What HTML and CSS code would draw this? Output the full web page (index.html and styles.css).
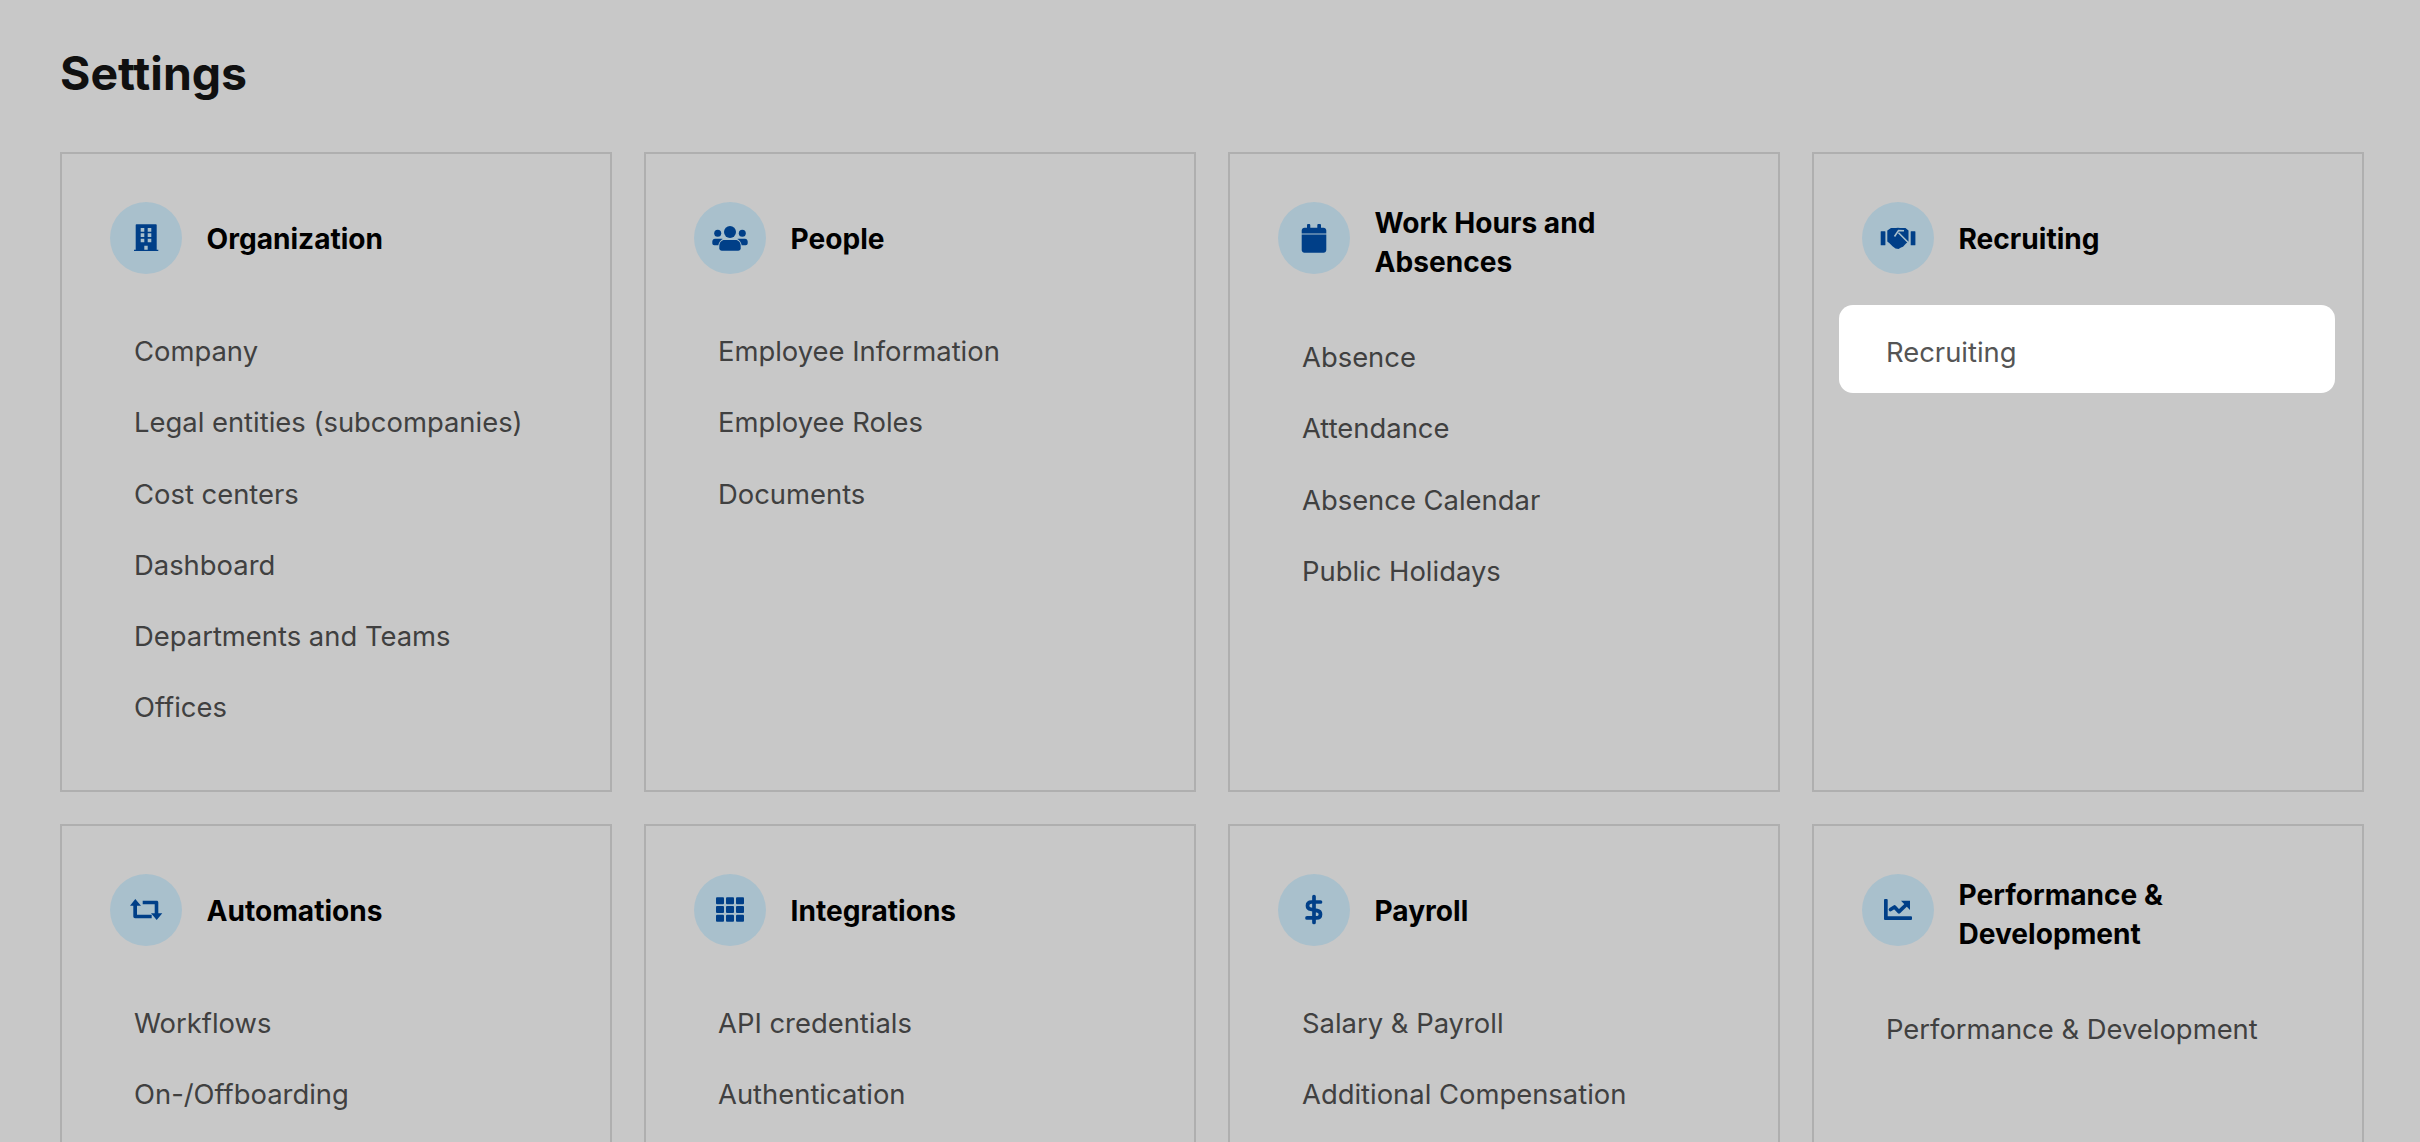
FILE: index.html
```html
<!DOCTYPE html>
<html lang="en">
<head>
    <meta charset="UTF-8">
    <meta name="viewport" content="width=device-width, initial-scale=1.0">
    <title>Settings</title>
    <link rel="stylesheet" href="styles.css">
</head>
<body>
    <div class="page">
        <h1 class="page-title">Settings</h1>
        <div class="card-grid">
            <section class="card">
                <div class="card-header">
                    <span class="card-icon">
                        <svg viewBox="0 0 36 36" class="icon"><path fill-rule="evenodd" d="M8.500 4.300h19.400a.8.800 0 0 1 .8.800v24.600h1.600V31H6v-1.300h1.700V5.100a.8.800 0 0 1 .8-.8zM12.700 8v3.700h3.600V8zM19.700 8v3.700h3.600V8zM12.700 13.300V17h3.600v-3.700zM19.700 13.300V17h3.600v-3.700zM12.700 18.700v3.600h3.600v-3.600zM19.700 18.700v3.600h3.600v-3.600zM16.300 25.700v4h3.400v-4z"/></svg>
                    </span>
                    <h2 class="card-title">Organization</h2>
                </div>
                <ul class="card-links">
                    <li class="card-link">Company</li>
                    <li class="card-link">Legal entities (subcompanies)</li>
                    <li class="card-link">Cost centers</li>
                    <li class="card-link">Dashboard</li>
                    <li class="card-link">Departments and Teams</li>
                    <li class="card-link">Offices</li>
                </ul>
            </section>
            <section class="card">
                <div class="card-header">
                    <span class="card-icon">
                        <svg viewBox="0 0 36 36" class="icon"><circle cx="18" cy="12" r="6"/><path d="M12.500 20h11c3 0 5.200 2.600 5.200 6v2.200c0 1.400-1.100 2.500-2.500 2.500H9.800c-1.400 0-2.500-1.100-2.500-2.500V26c0-3.400 2.200-6 5.200-6z"/><circle cx="5.700" cy="13.300" r="3.500"/><circle cx="30.300" cy="13.300" r="3.500"/><path d="M3 18.700h6.500c.4 0 .8.100 1.200.300-2.200 1.200-3.900 3.400-4.400 6.300H2.300c-1.100 0-2-.9-2-2v-1.800c0-1.500 1.200-2.800 2.700-2.800z"/><path d="M33 18.700h-6.500c-.4 0-.8.100-1.200.300 2.200 1.200 3.900 3.400 4.400 6.300h4c1.100 0 2-.9 2-2v-1.800c0-1.500-1.200-2.800-2.700-2.800z"/></svg>
                    </span>
                    <h2 class="card-title">People</h2>
                </div>
                <ul class="card-links">
                    <li class="card-link">Employee Information</li>
                    <li class="card-link">Employee Roles</li>
                    <li class="card-link">Documents</li>
                </ul>
            </section>
            <section class="card">
                <div class="card-header">
                    <span class="card-icon">
                        <svg viewBox="0 0 36 36" class="icon"><path d="M11 5.200c0-.7.500-1.200 1.200-1.200h.9c.7 0 1.200.500 1.200 1.200v2.500h7V5.200c0-.7.500-1.200 1.200-1.200h1.300c.7 0 1.200.500 1.200 1.200v2.500h2.500c1.600 0 2.800 1.200 2.800 2.800v3H5.700v-3c0-1.600 1.200-2.800 2.800-2.800H11z"/><path d="M5.700 14.500h24.600V30c0 1.500-1.200 2.700-2.700 2.700H8.400c-1.500 0-2.700-1.200-2.700-2.700z"/></svg>
                    </span>
                    <h2 class="card-title">Work Hours and Absences</h2>
                </div>
                <ul class="card-links">
                    <li class="card-link">Absence</li>
                    <li class="card-link">Attendance</li>
                    <li class="card-link">Absence Calendar</li>
                    <li class="card-link">Public Holidays</li>
                </ul>
            </section>
            <section class="card">
                <div class="card-header">
                    <span class="card-icon">
                        <svg viewBox="0 0 36 36" class="icon"><rect x=".7" y="11.300" width="4.700" height="14" rx=".5"/><rect x="30.700" y="11.300" width="4.700" height="14" rx=".5"/><path d="M11 8h5l2-.3 2 .3h5.500l3 2.500v11l-2.500 2-3 3.200-2 .8-2.500 1.500-3-.6-3-2.200-3-3-2.200-1.700V10.500z"/><path class="icon-cut" d="M14.500 16.500 18.500 10.500l5.500.3M18.500 12.700l10 10"/></svg>
                    </span>
                    <h2 class="card-title">Recruiting</h2>
                </div>
                <ul class="card-links">
                    <li class="card-link card-link-active">Recruiting</li>
                </ul>
            </section>
            <section class="card">
                <div class="card-header">
                    <span class="card-icon">
                        <svg viewBox="0 0 36 36" class="icon"><path d="M7.300 7 13 13.700H9v9h14.700v3.600H7a1.700 1.700 0 0 1-1.700-1.700V13.700H2z"/><path d="M14.700 8.700H28.600c1 0 1.700.7 1.700 1.700V21.300h4L28.700 28 23 21.300h3.700v-9h-12z"/></svg>
                    </span>
                    <h2 class="card-title">Automations</h2>
                </div>
                <ul class="card-links">
                    <li class="card-link">Workflows</li>
                    <li class="card-link">On-/Offboarding</li>
                </ul>
            </section>
            <section class="card">
                <div class="card-header">
                    <span class="card-icon">
                        <svg viewBox="0 0 36 36" class="icon"><rect x="4" y="5.300" width="8" height="7" rx="1"/><rect x="14" y="5.300" width="8" height="7" rx="1"/><rect x="24" y="5.300" width="8" height="7" rx="1"/><rect x="4" y="14" width="8" height="7" rx="1"/><rect x="14" y="14" width="8" height="7" rx="1"/><rect x="24" y="14" width="8" height="7" rx="1"/><rect x="4" y="22.700" width="8" height="7" rx="1"/><rect x="14" y="22.700" width="8" height="7" rx="1"/><rect x="24" y="22.700" width="8" height="7" rx="1"/></svg>
                    </span>
                    <h2 class="card-title">Integrations</h2>
                </div>
                <ul class="card-links">
                    <li class="card-link">API credentials</li>
                    <li class="card-link">Authentication</li>
                </ul>
            </section>
            <section class="card">
                <div class="card-header">
                    <span class="card-icon">
                        <svg viewBox="0 0 36 36" class="icon"><path class="icon-stroke" d="M18 4.500v26M24.500 10H15.500c-3 0-4 1.800-4 3.700 0 2 1.300 3.200 3.300 3.600l6.400 1.300c2 .4 3.300 1.600 3.300 3.600 0 2-1 3.700-4 3.700H11"/></svg>
                    </span>
                    <h2 class="card-title">Payroll</h2>
                </div>
                <ul class="card-links">
                    <li class="card-link">Salary &amp; Payroll</li>
                    <li class="card-link">Additional Compensation</li>
                </ul>
            </section>
            <section class="card">
                <div class="card-header">
                    <span class="card-icon">
                        <svg viewBox="0 0 36 36" class="icon"><path d="M4 8a1 1 0 0 1 1-1h1.700a1 1 0 0 1 1 1v16.300H31a1 1 0 0 1 1 1V27a1 1 0 0 1-1 1H5a1 1 0 0 1-1-1z"/><path class="icon-stroke" d="M10.500 17.500 14.500 15l4.500 4.700 8-7.700"/><path d="M21 8.700h9V18z"/></svg>
                    </span>
                    <h2 class="card-title">Performance &amp; Development</h2>
                </div>
                <ul class="card-links">
                    <li class="card-link">Performance &amp; Development</li>
                </ul>
            </section>
        </div>
    </div>
</body>
</html>
```

FILE: styles.css
```css
html, body {
    height: 100%;
}
body {
    margin: 0;
    overflow: hidden;
    background-color: #c8c8c8;
    font-family: Inter, "Liberation Sans", sans-serif;
}
.page {
    padding: 46px 56px 0 60px;
}
.page-title {
    margin: 0 0 52px;
    font-size: 46.4px;
    line-height: 54px;
    font-weight: 700;
    color: #101010;
}
.card-grid {
    display: grid;
    grid-template-columns: repeat(4, 1fr);
    grid-auto-rows: 640px;
    gap: 32px;
}
.card {
    box-sizing: border-box;
    border: 2px solid #afafaf;
    padding: 48px 27px 0 25px;
}
.card-header {
    display: flex;
    align-items: center;
    gap: 24.5px;
    padding-left: 23px;
    margin-bottom: 42px;
}
.card-icon {
    display: flex;
    flex: none;
    align-self: flex-start;
    align-items: center;
    justify-content: center;
    width: 72px;
    height: 72px;
    border-radius: 50%;
    background-color: #a9c0cc;
}
.icon {
    width: 36px;
    height: 36px;
    fill: #003f88;
}
.icon-cut {
    fill: none;
    stroke: #a9c0cc;
    stroke-width: 1.6;
}
.icon-stroke {
    fill: none;
    stroke: #003f88;
    stroke-width: 3.7;
    stroke-linecap: round;
    stroke-linejoin: round;
}
.card-title {
    margin: 2px 0 -1px;
    max-width: 300px;
    font-size: 28.1px;
    line-height: 38.6px;
    font-weight: 700;
    color: #000;
}
.card-links {
    margin: 0;
    padding: 0;
    list-style: none;
}
.card-link {
    padding-left: 47px;
    font-size: 27.4px;
    line-height: 71.3px;
    color: #404040;
}
.card-link-active {
    margin: -11px 0 -5px;
    padding-top: 6px;
    line-height: 82px;
    border-radius: 14px;
    background-color: #fff;
    color: #555;
}
```
